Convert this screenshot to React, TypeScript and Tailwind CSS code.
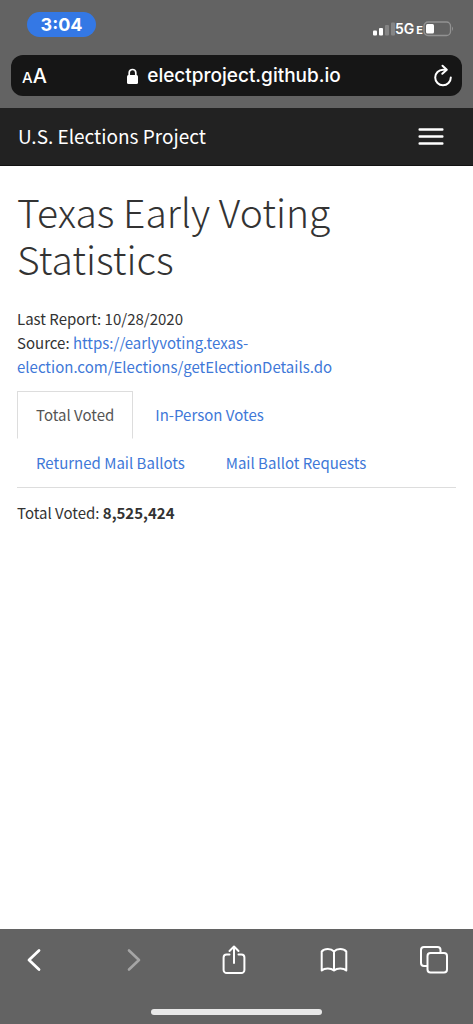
import { useState } from 'react';

const tabs = [
  'Total Voted',
  'In-Person Votes',
  'Returned Mail Ballots',
  'Mail Ballot Requests',
];

function StatusBar() {
  return (
    <div className="flex h-[55px] items-start justify-between pt-3 pr-[19px] pl-[27px]">
      <span className="flex h-[25px] w-[69px] items-center justify-center rounded-full bg-[#3478e5] text-[18px] font-bold">
        3:04
      </span>
      <div className="flex h-[33px] items-center">
        <svg width="22" height="14" viewBox="0 0 22 14" aria-hidden="true">
          <rect x="0" y="8.5" width="4" height="5" rx="1" fill="#fff" />
          <rect x="6" y="6" width="4" height="7.5" rx="1" fill="#fff" />
          <rect x="12" y="3" width="4" height="10.5" rx="1" fill="#858585" />
          <rect x="18" y="0.5" width="4" height="13" rx="1" fill="#858585" />
        </svg>
        <span className="flex items-baseline text-[14px] font-semibold">
          5G
          <span className="ml-0.5 text-[11px] font-bold">E</span>
        </span>
        <svg width="31" height="16" viewBox="0 0 31 16" aria-hidden="true">
          <rect x="1" y="1" width="26.5" height="13.5" rx="4" fill="none" stroke="#929292" strokeWidth="1.3" />
          <rect x="3" y="3" width="8" height="9.5" rx="1.5" fill="#fff" />
          <path d="M29 5.5q2 2 0 4.5z" fill="#929292" />
        </svg>
      </div>
    </div>
  );
}

function AddressBar() {
  return (
    <div className="px-[11px] pb-3">
      <div className="flex h-[41px] items-center justify-between rounded-xl bg-[#161616] pt-px pr-[9px] pl-[11px]">
        <button aria-label="Text size" className="flex w-7 items-baseline font-medium">
          <span className="text-[15px]">A</span>
          <span className="text-[20px]">A</span>
        </button>
        <button className="flex items-center gap-2 text-[19px] font-medium">
          <svg width="13" height="17" viewBox="0 0 13 17" aria-hidden="true">
            <rect x="1" y="7" width="11" height="9" rx="1.5" fill="#fff" />
            <path d="M3.2 8V4.8a3.3 3.3 0 0 1 6.6 0V8" fill="none" stroke="#fff" strokeWidth="1.7" />
          </svg>
          electproject.github.io
        </button>
        <button aria-label="Reload" className="flex w-9 justify-end">
          <svg width="20" height="24" viewBox="0 0 20 24" fill="none" stroke="#fff" strokeWidth="2" strokeLinecap="round" strokeLinejoin="round">
            <path d="M17.8 13.5A7.8 7.8 0 1 1 10 5.7h3" />
            <path d="M9.500 1.800l4.300 4-4.500 4" />
          </svg>
        </button>
      </div>
    </div>
  );
}

function Navbar() {
  return (
    <nav className="flex h-[58px] items-center justify-between border-b border-[#121212] bg-[#222] pr-6 pl-[18px] text-white">
      <a href="#" className="text-[19px]">
        U.S. Elections Project
      </a>
      <button aria-label="Toggle navigation" className="flex w-9 justify-center">
        <svg width="26" height="18" viewBox="0 0 26 18" fill="#fff">
          <rect x="0.5" y="0.3" width="25" height="2.4" rx="1" />
          <rect x="0.5" y="7.3" width="25" height="2.4" rx="1" />
          <rect x="0.5" y="14.3" width="25" height="2.4" rx="1" />
        </svg>
      </button>
    </nav>
  );
}

function Toolbar() {
  return (
    <footer className="bg-[#636363] pt-[13px]">
      <div className="flex items-center justify-between pr-[21px] pl-4">
        <button aria-label="Back" className="flex size-9 items-center justify-center">
          <svg width="14" height="24" viewBox="0 0 14 24" fill="none" stroke="#fff" strokeWidth="2.8" strokeLinecap="round" strokeLinejoin="round">
            <path d="M12 2.5L2 12l10 9.5" />
          </svg>
        </button>
        <button aria-label="Forward" className="flex size-9 items-center justify-center">
          <svg width="14" height="24" viewBox="0 0 14 24" fill="none" stroke="#a5a5a5" strokeWidth="2.6" strokeLinecap="round" strokeLinejoin="round">
            <path d="M2 2.5L12 12 2 21.5" />
          </svg>
        </button>
        <button aria-label="Share" className="flex size-9 items-center justify-center">
          <svg width="24" height="30" viewBox="0 0 24 30" fill="none" stroke="#fff" strokeWidth="2" strokeLinecap="round" strokeLinejoin="round">
            <path d="M7.5 9.500H4.600a3 3 0 0 0-3 3v12.500a3 3 0 0 0 3 3h14.800a3 3 0 0 0 3-3V12.500a3 3 0 0 0-3-3h-2.900" />
            <path d="M12 18V1.5M7.5 6L12 1.5 16.5 6" />
          </svg>
        </button>
        <button aria-label="Bookmarks" className="flex size-9 items-center justify-center">
          <svg width="28" height="24" viewBox="0 0 28 24" fill="none" stroke="#fff" strokeWidth="2" strokeLinejoin="round">
            <path d="M14 3.5C11 .3 4.5.3 1.700 3.500V22.500C4.500 19.800 11 19.800 14 22.500 17 19.800 23.500 19.800 26.300 22.500V3.500C23.500.3 17 .3 14 3.500zM14 3.500V22" />
          </svg>
        </button>
        <button aria-label="Tabs" className="flex size-9 items-center justify-center">
          <svg width="30" height="30" viewBox="0 0 30 30" fill="none" stroke="#fff" strokeWidth="2">
            <rect x="8.500" y="8" width="19.500" height="19.500" rx="3" />
            <path d="M8.500 21H5a3 3 0 0 1-3-3V5a3 3 0 0 1 3-3h13.500a3 3 0 0 1 3 3v3" />
          </svg>
        </button>
      </div>
      <div className="mx-auto mt-[31px] mb-[9px] h-1.5 w-[36%] rounded-full bg-[#e8e8e8]" />
    </footer>
  );
}

export default function App() {
  const [active, setActive] = useState('Total Voted');

  return (
    <div className="flex min-h-screen flex-col bg-white font-['Noto_Sans_CJK_SC',sans-serif]">
      <header className="bg-[#636363] font-['Inter',sans-serif] text-white">
        <StatusBar />
        <AddressBar />
      </header>
      <Navbar />
      <main className="flex-1 px-[17px] pt-[22px] text-[15px] leading-6 text-[#333]">
        <h1 className="text-[39px] leading-[47px] font-light">
          Texas Early Voting Statistics
        </h1>
        <p className="mt-[25px]">Last Report: 10/28/2020</p>
        <p>
          Source:{' '}
          <a href="#" className="text-[#4078d8]">
            https://earlyvoting.texas-election.com/Elections/getElectionDetails.do
          </a>
        </p>
        <div
          role="tablist"
          className="mt-3 flex flex-wrap gap-x-[3px] border-b border-[#ddd]"
        >
          {tabs.map((tab) => (
            <button
              key={tab}
              role="tab"
              aria-selected={tab === active}
              onClick={() => setActive(tab)}
              className={
                tab === active
                  ? 'h-12 border border-[#ddd] border-b-white px-[18px] text-[#555]'
                  : 'h-12 border border-transparent px-[18px] text-[#4078d8]'
              }
            >
              {tab}
            </button>
          ))}
        </div>
        {active === 'Total Voted' && (
          <p role="tabpanel" className="mt-[13px]">
            Total Voted: <b>8,525,424</b>
          </p>
        )}
      </main>
      <Toolbar />
    </div>
  );
}
